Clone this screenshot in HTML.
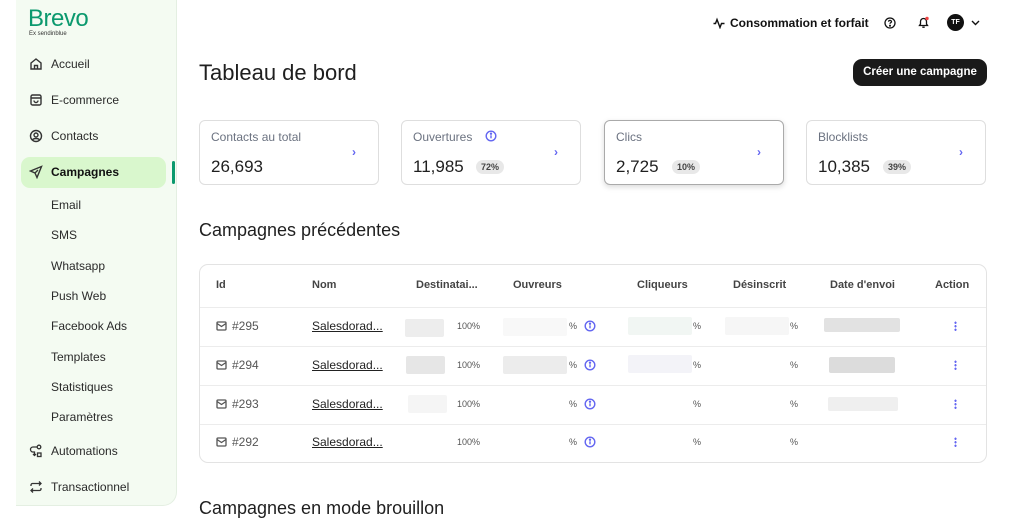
<!DOCTYPE html>
<html><head><meta charset="utf-8"><style>
*{margin:0;padding:0;box-sizing:border-box}
body{width:1024px;height:512px;overflow:hidden;background:#fff;font-family:"Liberation Sans",sans-serif;color:#1f1f1f;position:relative}
.a{position:absolute;white-space:nowrap}
.side{position:absolute;left:16px;top:0;width:161px;height:506px;background:#f4fbf2;border-right:1px solid #e4efe2;border-bottom:1px solid #e4efe2;border-radius:0 0 14px 0}
.nav{font-size:12px;color:#2a2a2a;transform:translateY(-50%)}
.ic{position:absolute;left:29px;transform:translateY(-50%)}
.card{position:absolute;top:120px;width:180px;height:65px;border:1px solid #dedede;border-radius:6px;background:#fff}
.card .l{position:absolute;left:11px;top:9px;font-size:12px;color:#6b7280}
.card .v{position:absolute;left:11px;top:36px;font-size:17px;color:#1f1f1f}
.card .b{position:absolute;top:39px;font-size:9px;background:#e8e8e8;border-radius:8px;padding:2px 5px;color:#444;font-weight:bold}
.card .c{position:absolute;right:22px;top:24px;color:#6366f1;font-size:12px;font-weight:bold}
.th{font-size:11px;color:#444;top:279px;font-weight:bold;-webkit-text-stroke:0}
.row{position:absolute;left:200px;width:786px;height:1px;background:#ececec}
.cell{font-size:11px;color:#555}
.blur{position:absolute;border-radius:2px}
</style></head><body>
<div class="side"></div>
<div class="a" style="left:28px;top:5px;font-size:24px;color:#0b996e;letter-spacing:-0.5px">Brevo</div>
<div class="a" style="left:29px;top:31px;font-size:6px;color:#333">Ex sendinblue</div>
<div class="a" style="left:21px;top:157px;width:145px;height:31px;background:#d9f7cd;border-radius:9px"></div>
<div class="a" style="left:172px;top:161px;width:3px;height:23px;background:#0b996e;border-radius:2px"></div>
<svg class="ic" style="top:64px" width="14" height="14" viewBox="0 0 14 14" fill="none" stroke="#333" stroke-width="1.4"><path d="M2 6L7 2l5 4v6H2z"/><path d="M5.5 12V8.5h3V12"/></svg>
<svg class="ic" style="top:100px" width="14" height="14" viewBox="0 0 14 14" fill="none" stroke="#333" stroke-width="1.4"><rect x="2" y="2" width="10" height="10" rx="1.5"/><path d="M2 5h10M5 7.5a2 2 0 004 0"/></svg>
<svg class="ic" style="top:136px" width="14" height="14" viewBox="0 0 14 14" fill="none" stroke="#333" stroke-width="1.4"><circle cx="7" cy="7" r="5.5"/><circle cx="7" cy="6" r="2"/><path d="M3.5 11c1-2 6-2 7 0"/></svg>
<svg class="ic" style="top:172px" width="14" height="14" viewBox="0 0 14 14" fill="none" stroke="#333" stroke-width="1.4"><path d="M12.5 1.5L1.5 6l4.5 2 2 4.5z M6 8l3-3"/></svg>
<svg class="ic" style="top:451px" width="14" height="14" viewBox="0 0 14 14" fill="none" stroke="#333" stroke-width="1.3"><circle cx="10" cy="3" r="1.8"/><rect x="8.5" y="9" width="3.5" height="3.5"/><path d="M8 3H4a2.5 2.5 0 000 5h1.5v3"/><path d="M4 10l1.5 1.5L7 10"/></svg>
<svg class="ic" style="top:487px" width="14" height="14" viewBox="0 0 14 14" fill="none" stroke="#333" stroke-width="1.3"><path d="M2 6V5a1.5 1.5 0 011.5-1.5H12M10 1.5l2 2-2 2M12 8v1a1.5 1.5 0 01-1.5 1.5H2M4 12.5l-2-2 2-2"/></svg>
<div class="a nav" style="left:51px;top:64px">Accueil</div>
<div class="a nav" style="left:51px;top:100px">E-commerce</div>
<div class="a nav" style="left:51px;top:136px">Contacts</div>
<div class="a nav" style="left:51px;top:172px;font-weight:bold;color:#111">Campagnes</div>
<div class="a nav" style="left:51px;top:205px">Email</div>
<div class="a nav" style="left:51px;top:235px">SMS</div>
<div class="a nav" style="left:51px;top:266px">Whatsapp</div>
<div class="a nav" style="left:51px;top:296px">Push Web</div>
<div class="a nav" style="left:51px;top:326px">Facebook Ads</div>
<div class="a nav" style="left:51px;top:357px">Templates</div>
<div class="a nav" style="left:51px;top:387px">Statistiques</div>
<div class="a nav" style="left:51px;top:417px">Paramètres</div>
<div class="a nav" style="left:51px;top:451px">Automations</div>
<div class="a nav" style="left:51px;top:487px">Transactionnel</div>

<svg class="a" style="left:713px;top:17px" width="12" height="12" viewBox="0 0 12 12" fill="none" stroke="#111" stroke-width="1.4"><path d="M0.5 6.5h2l1.5-4 3 8 1.5-4h3"/></svg>
<div class="a" style="left:730px;top:16px;font-size:12px;font-weight:bold;color:#111">Consommation et forfait</div>
<svg class="a" style="left:884px;top:17px" width="12" height="12" viewBox="0 0 12 12" fill="none" stroke="#111" stroke-width="1.3"><circle cx="6" cy="6" r="5"/><path d="M4.5 4.7a1.5 1.5 0 113 .3c-.5.6-1.5.8-1.5 1.7"/><circle cx="6" cy="8.7" r=".4" fill="#111"/></svg>
<svg class="a" style="left:917px;top:16px" width="13" height="13" viewBox="0 0 13 13" fill="none" stroke="#111" stroke-width="1.3"><path d="M2.5 9.5h8L9.5 8V5.5a3 3 0 00-6 0V8z M5.3 11.2h2.4"/><circle cx="10" cy="2.5" r="1.7" fill="#ef4444" stroke="none"/></svg>
<div class="a" style="left:947px;top:14px;width:17px;height:17px;border-radius:50%;background:#111;color:#fff;font-size:7px;font-weight:bold;text-align:center;line-height:17px">TF</div>
<svg class="a" style="left:971px;top:20px" width="9" height="6" viewBox="0 0 9 6" fill="none" stroke="#111" stroke-width="1.4"><path d="M1 1l3.5 3.5L8 1"/></svg>

<div class="a" style="left:199px;top:60px;font-size:22px;color:#1f1f1f">Tableau de bord</div>
<div class="a" style="left:853px;top:59px;width:134px;height:27px;background:#1a1a1a;border-radius:9px;color:#fff;font-size:11.5px;font-weight:bold;text-align:center;line-height:27px">Créer une campagne</div>

<div class="card" style="left:199px"><div class="l">Contacts au total</div><div class="v">26,693</div><div class="c">›</div></div>
<div class="card" style="left:401px"><div class="l">Ouvertures</div><svg class="a" style="left:83px;top:9px" width="12" height="12" viewBox="0 0 12 12" fill="none" stroke="#6366f1" stroke-width="1.4"><circle cx="6" cy="6" r="4.8"/><path d="M6 5.3v3"/><circle cx="6" cy="3.7" r=".5" fill="#6366f1"/></svg><div class="v">11,985</div><div class="b" style="left:74px">72%</div><div class="c">›</div></div>
<div class="card" style="left:604px;border-color:#aaa;box-shadow:0 2px 6px rgba(0,0,0,.15)"><div class="l">Clics</div><div class="v">2,725</div><div class="b" style="left:67px">10%</div><div class="c">›</div></div>
<div class="card" style="left:806px"><div class="l">Blocklists</div><div class="v">10,385</div><div class="b" style="left:76px">39%</div><div class="c">›</div></div>

<div class="a" style="left:199px;top:220px;font-size:18px;color:#1f1f1f">Campagnes précédentes</div>
<div class="a" style="left:199px;top:264px;width:788px;height:199px;border:1px solid #e3e3e3;border-radius:9px"></div>
<div class="a th" style="left:216px">Id</div>
<div class="a th" style="left:312px">Nom</div>
<div class="a th" style="left:416px">Destinatai...</div>
<div class="a th" style="left:513px">Ouvreurs</div>
<div class="a th" style="left:637px">Cliqueurs</div>
<div class="a th" style="left:733px">Désinscrit</div>
<div class="a th" style="left:830px">Date d'envoi</div>
<div class="a th" style="left:935px">Action</div>
<div class="row" style="top:307px"></div><div class="row" style="top:346px"></div><div class="row" style="top:385px"></div><div class="row" style="top:424px"></div>

<div class="blur" style="left:405px;top:319px;width:39px;height:18px;background:#ededed"></div>
<div class="blur" style="left:406px;top:356px;width:39px;height:18px;background:#e6e6e6"></div>
<div class="blur" style="left:408px;top:395px;width:39px;height:18px;background:#f5f5f5"></div>
<div class="blur" style="left:503px;top:318px;width:64px;height:18px;background:#f8f8f8"></div>
<div class="blur" style="left:503px;top:356px;width:64px;height:18px;background:#ececec"></div>
<div class="blur" style="left:628px;top:317px;width:64px;height:18px;background:#f1f6f3"></div>
<div class="blur" style="left:628px;top:355px;width:64px;height:18px;background:#f3f3f8"></div>
<div class="blur" style="left:725px;top:317px;width:64px;height:18px;background:#f6f6f6"></div>
<div class="blur" style="left:824px;top:318px;width:76px;height:14px;background:#e2e2e2"></div>
<div class="blur" style="left:829px;top:357px;width:66px;height:16px;background:#dcdcdc"></div>
<div class="blur" style="left:828px;top:397px;width:70px;height:14px;background:#efefef"></div>

<div id="rows"></div>
<script>
var ys=[326,365,404,442],ids=["#295","#294","#293","#292"],h="";
for(var i=0;i<4;i++){var y=ys[i]-7;
h+='<svg class="a" style="left:216px;top:'+(y+2)+'px" width="11" height="10" viewBox="0 0 11 10" fill="none" stroke="#555" stroke-width="1.3"><rect x="1" y="1" width="9" height="8" rx="1"/><path d="M1 2.5l4.5 3 4.5-3"/></svg>';
h+='<div class="a cell" style="left:232px;top:'+(y)+'px;font-size:12px">'+ids[i]+'</div>';
h+='<div class="a cell" style="left:312px;top:'+(y)+'px;font-size:12px;color:#222;text-decoration:underline">Salesdorad...</div>';
h+='<div class="a cell" style="left:457px;top:'+(y+2)+'px;font-size:9px">100%</div>';
h+='<div class="a cell" style="left:569px;top:'+(y+2)+'px;font-size:9px">%</div>';
h+='<svg class="a" style="left:584px;top:'+(y+1)+'px" width="12" height="12" viewBox="0 0 12 12" fill="none" stroke="#6366f1" stroke-width="1.4"><circle cx="6" cy="6" r="4.8"/><path d="M6 5.3v3"/><circle cx="6" cy="3.7" r=".5" fill="#6366f1"/></svg>';
h+='<div class="a cell" style="left:693px;top:'+(y+2)+'px;font-size:9px">%</div>';
h+='<div class="a cell" style="left:790px;top:'+(y+2)+'px;font-size:9px">%</div>';
h+='<div class="a" style="left:954px;top:'+(y+2)+'px;width:3px;height:10px;background:radial-gradient(circle,#6366f1 1px,transparent 1.3px) 0 0/3px 3.5px"></div>';}
document.getElementById("rows").innerHTML=h;
</script>
<div class="a" style="left:199px;top:498px;font-size:18px;color:#1f1f1f">Campagnes en mode brouillon</div>
</body></html>
